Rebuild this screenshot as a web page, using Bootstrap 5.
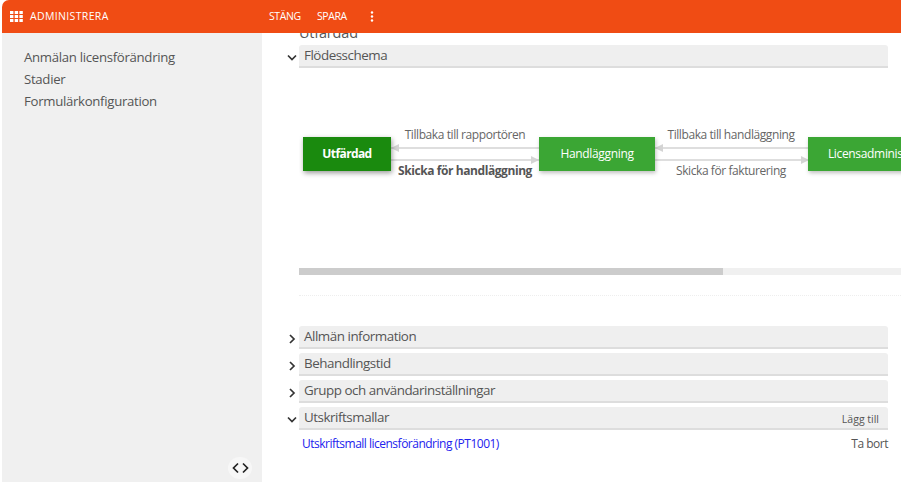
<!DOCTYPE html>
<html lang="sv"><head><meta charset="utf-8"><title>Administrera</title>
<link href="https://cdn.jsdelivr.net/npm/bootstrap@5.3.0/dist/css/bootstrap.min.css" rel="stylesheet">
<style>
html,body{height:100%;overflow:hidden;background:#fff}
body{font-family:"Open Sans","Noto Sans",sans-serif;color:#555}
.shell{width:901px;height:482px;padding-left:2px}
.topbar{height:33px;background:#f04c14;color:#fff;border-top-left-radius:7px;font-size:10.5px;position:relative;z-index:2}
.brand{width:259px;padding-left:8px;gap:7px;letter-spacing:.35px}
.topact{width:48px;letter-spacing:-.4px}
.topact2{width:49px;letter-spacing:-.4px}
.body-row{height:449px}
.sidebar{width:260px;background:#f0f0f0;padding:13px 0 0 22px;font-size:13.2px;letter-spacing:-.3px;position:relative;flex:none}
.sidebar div{height:22px;line-height:22px;color:#555}
.toggle{position:absolute;left:226px;top:424px;width:24px;height:24px;border-radius:50%;background:#f7f7f7}
.mainpane{flex:1;min-width:0;overflow:hidden;padding-left:37px;position:relative}
.clipped{font-size:14.5px;letter-spacing:-.2px;line-height:20px;margin:-10px 0 2px;color:#555}
.sechead{height:23px;width:589px;background:#efefef;border-bottom:2px solid #ddd;border-radius:3px 3px 0 0;font-size:13.4px;letter-spacing:-.47px;line-height:21px;padding-left:5px;position:relative;margin-bottom:4px}
.caret{position:absolute;left:-12px;top:8px;width:10px;height:10px}
.canvas{height:201px;width:602px;position:relative;overflow:hidden;margin-top:-5px}
.wfnode{position:absolute;top:70px;height:34px;line-height:34px;text-align:center;color:#fff;background:#3ba634;font-size:12px;letter-spacing:-.33px;box-shadow:1px 2px 4px rgba(0,0,0,.25);white-space:nowrap;overflow:hidden}
.wfnode.active{background:#1a8a0e;font-weight:700;letter-spacing:-.6px;box-shadow:1px 2px 5px rgba(0,0,0,.4)}
.wfline{position:absolute;height:2px;background:#dedede}
.wfhead{position:absolute;width:0;height:0;border-top:4px solid transparent;border-bottom:4px solid transparent}
.wfhead.r{border-left:8px solid #d4d4d4}.wfhead.l{border-right:8px solid #d4d4d4}
.wflabel{position:absolute;font-size:12px;letter-spacing:-.42px;line-height:16px;text-align:center;white-space:nowrap;color:#666}
.wflabel.strong{font-weight:700;letter-spacing:-.42px;color:#555}
.hscroll{width:602px;height:7px;background:#f0f0f0}
.hthumb{height:7px;background:#ccc}
.dotrule{width:602px;border-top:1px dotted #eee;margin-top:20px;margin-bottom:30px}
.addtxt{position:absolute;right:9px;top:4px;font-size:10.5px;letter-spacing:0;line-height:16px;color:#555}
.printrow{width:589px;padding:2px 0 0 3px;font-size:12px;letter-spacing:-.5px;line-height:20px;margin-top:2px}
.printrow a{color:#2222ee;text-decoration:none}
</style></head><body>
<div class="shell d-flex flex-column">
 <div class="topbar d-flex align-items-center">
  <div class="brand d-flex align-items-center">
   <svg width="13" height="11" viewBox="0 0 13 11" fill="#fff"><rect width="3.4" height="3"/><rect x="4.7" width="3.4" height="3"/><rect x="9.4" width="3.4" height="3"/><rect y="4" width="3.4" height="3"/><rect x="4.7" y="4" width="3.4" height="3"/><rect x="9.4" y="4" width="3.4" height="3"/><rect y="8" width="3.4" height="3"/><rect x="4.7" y="8" width="3.4" height="3"/><rect x="9.4" y="8" width="3.4" height="3"/></svg>
   <span>ADMINISTRERA</span>
  </div>
  <div class="d-flex align-items-center">
   <span class="topact ms-2">STÄNG</span><span class="topact2">SPARA</span>
   <svg class="ms-1" width="4" height="11" viewBox="0 0 4 11" fill="#fff"><circle cx="2" cy="1.5" r="1.2"/><circle cx="2" cy="5.5" r="1.2"/><circle cx="2" cy="9.5" r="1.2"/></svg>
  </div>
 </div>
 <div class="body-row d-flex">
  <nav class="sidebar">
   <div>Anmälan licensförändring</div><div>Stadier</div><div>Formulärkonfiguration</div>
   <div class="toggle d-flex align-items-center justify-content-center">
    <svg width="17" height="12" viewBox="0 0 17 12" fill="none" stroke="#222" stroke-width="1.7"><path d="M6 1.500 1.500 6 6 10.500M11 1.500 15.500 6 11 10.500"/></svg>
   </div>
  </nav>
  <main class="mainpane">
   <div class="clipped">Utfärdad</div>
   <div class="sechead">Flödesschema
    <svg class="caret" viewBox="0 0 10 10" fill="none" stroke="#333" stroke-width="1.7"><path d="M1 2.500l4 4 4-4"/></svg></div>
   <div class="canvas">
    <div class="wfline" style="left:4px;top:80px;width:240px"></div>
    <div class="wfline" style="left:4px;top:92px;width:240px"></div>
    <div class="wfline" style="left:356px;top:80px;width:154px"></div>
    <div class="wfline" style="left:356px;top:92px;width:154px"></div>
    <div class="wfhead l" style="left:92px;top:77px"></div>
    <div class="wfhead r" style="left:232px;top:89px"></div>
    <div class="wfhead l" style="left:356px;top:77px"></div>
    <div class="wfhead r" style="left:502px;top:89px"></div>
    <div class="wfnode active" style="left:4px;width:88px">Utfärdad</div>
    <div class="wfnode" style="left:240px;width:116px">Handläggning</div>
    <div class="wfnode" style="left:509px;width:150px">Licensadministration</div>
    <div class="wflabel" style="left:92px;width:148px;top:60px">Tillbaka till rapportören</div>
    <div class="wflabel strong" style="left:92px;width:148px;top:96px">Skicka för handläggning</div>
    <div class="wflabel" style="left:356px;width:152px;top:60px">Tillbaka till handläggning</div>
    <div class="wflabel" style="left:356px;width:152px;top:96px">Skicka för fakturering</div>
   </div>
   <div class="hscroll"><div class="hthumb" style="width:424px"></div></div>
   <div class="dotrule"></div>
   <div class="sechead">Allmän information
    <svg class="caret" viewBox="0 0 10 10" fill="none" stroke="#333" stroke-width="1.7"><path d="M3 1l4 4-4 4"/></svg></div>
   <div class="sechead">Behandlingstid
    <svg class="caret" viewBox="0 0 10 10" fill="none" stroke="#333" stroke-width="1.7"><path d="M3 1l4 4-4 4"/></svg></div>
   <div class="sechead">Grupp och användarinställningar
    <svg class="caret" viewBox="0 0 10 10" fill="none" stroke="#333" stroke-width="1.7"><path d="M3 1l4 4-4 4"/></svg></div>
   <div class="sechead mb-0">Utskriftsmallar
    <svg class="caret" viewBox="0 0 10 10" fill="none" stroke="#333" stroke-width="1.7"><path d="M1 2.500l4 4 4-4"/></svg>
    <span class="addtxt">Lägg till</span></div>
   <div class="printrow d-flex justify-content-between"><a href="#">Utskriftsmall licensförändring (PT1001)</a><span>Ta bort</span></div>
  </main>
 </div>
</div>
<script src="https://cdn.jsdelivr.net/npm/bootstrap@5.3.0/dist/js/bootstrap.bundle.min.js"></script>
</body></html>
